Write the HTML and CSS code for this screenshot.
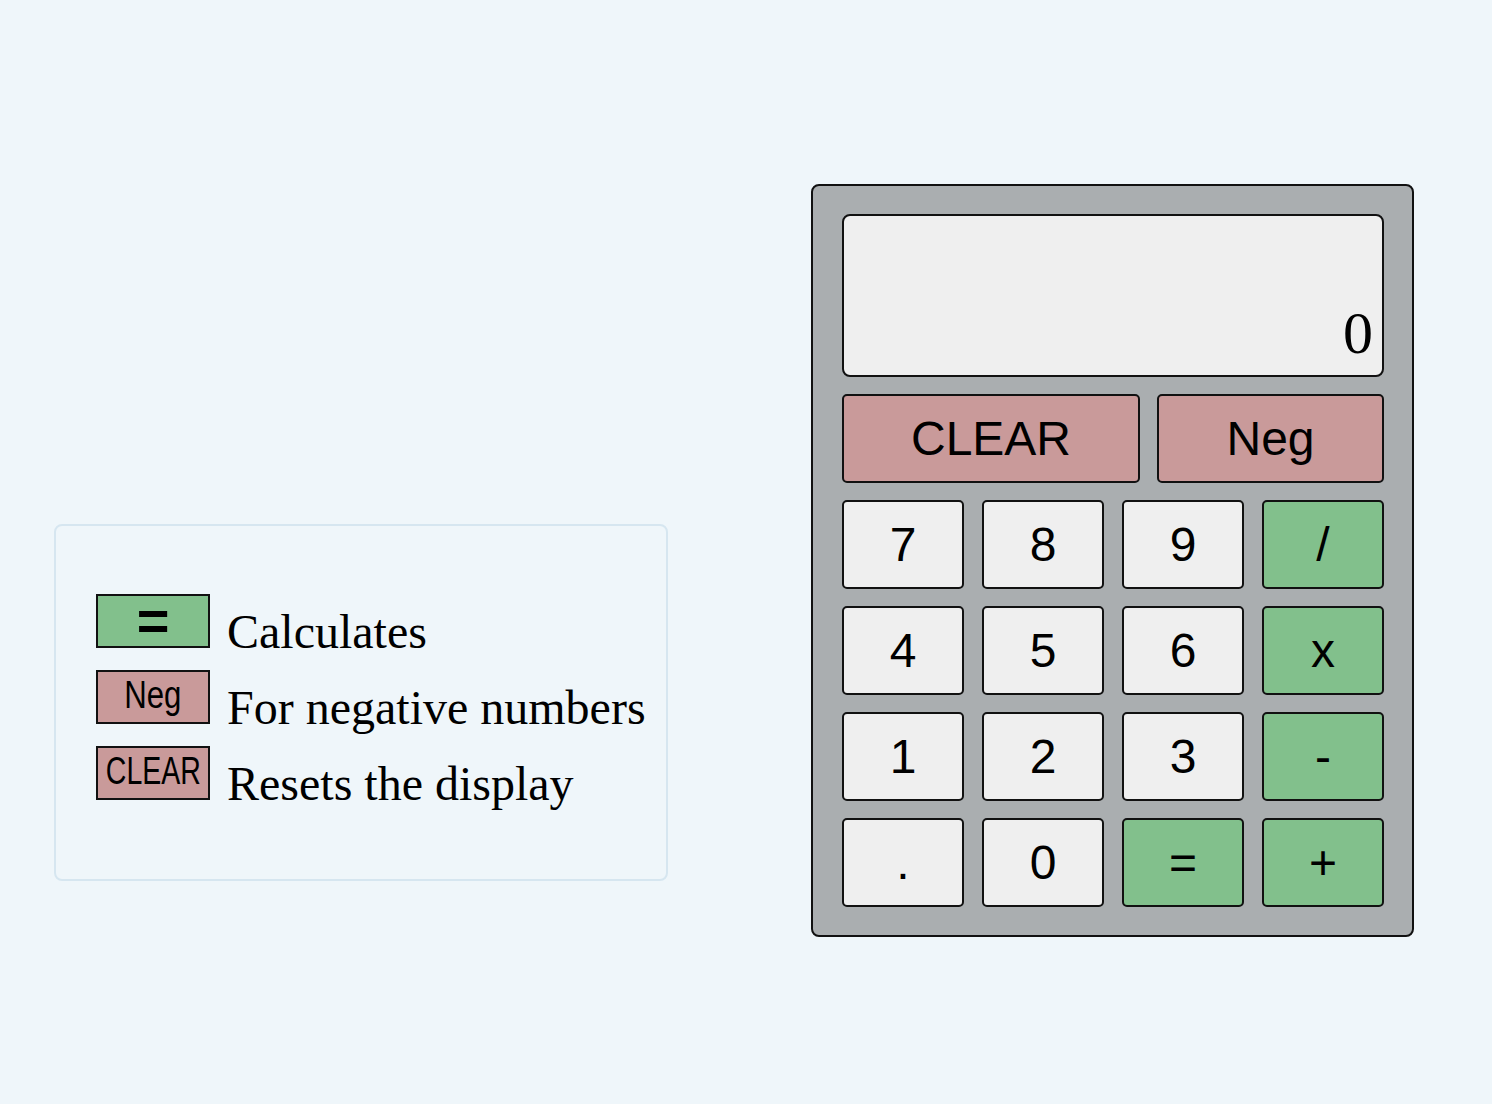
FILE: index.html
```html
<!DOCTYPE html>
<html lang="en">
<head>
<meta charset="utf-8">
<title>Calculator</title>
<link rel="stylesheet" href="styles.css">
</head>
<body>
<div class="page">
  <div class="legend">
    <div class="legend-row"><span class="badge badge-green"><span class="badge-text eq">=</span></span><span class="legend-text">Calculates</span></div>
    <div class="legend-row"><span class="badge badge-pink"><span class="badge-text squish">Neg</span></span><span class="legend-text">For negative numbers</span></div>
    <div class="legend-row"><span class="badge badge-pink"><span class="badge-text squish-more">CLEAR</span></span><span class="legend-text">Resets the display</span></div>
  </div>
  <div class="calc">
    <div class="display"><span class="display-value">0</span></div>
    <div class="top-row">
      <button class="key key-pink key-clear">CLEAR</button>
      <button class="key key-pink key-neg">Neg</button>
    </div>
    <div class="keys">
      <button class="key">7</button>
      <button class="key">8</button>
      <button class="key">9</button>
      <button class="key key-green">/</button>
      <button class="key">4</button>
      <button class="key">5</button>
      <button class="key">6</button>
      <button class="key key-green">x</button>
      <button class="key">1</button>
      <button class="key">2</button>
      <button class="key">3</button>
      <button class="key key-green">-</button>
      <button class="key">.</button>
      <button class="key">0</button>
      <button class="key key-green">=</button>
      <button class="key key-green">+</button>
    </div>
  </div>
</div>
</body>
</html>
```
FILE: styles.css
```css
html, body {
  margin: 0;
  padding: 0;
  background: #eff6fa;
}
body {
  font-family: "Liberation Serif", "Times New Roman", serif;
  color: #000;
}
.page {
  display: flex;
  align-items: flex-start;
  padding: 184px 0 0 54px;
  gap: 143px;
}
.legend {
  box-sizing: border-box;
  width: 614px;
  height: 357px;
  margin-top: 340px;
  border: 2px solid #d6e6f0;
  border-radius: 8px;
  padding: 68px 0 0 40px;
  display: flex;
  flex-direction: column;
  gap: 22px;
}
.legend-row {
  height: 54px;
  display: flex;
  align-items: flex-end;
  white-space: nowrap;
}
.legend-text {
  font-size: 48px;
  line-height: 48px;
  margin-bottom: -8px;
}
.badge {
  box-sizing: border-box;
  width: 114px;
  height: 54px;
  flex: none;
  align-self: flex-start;
  border: 2px solid #111;
  margin-right: 17px;
  display: flex;
  justify-content: center;
  align-items: flex-start;
  font-family: "Liberation Sans", Arial, sans-serif;
  font-size: 38px;
  line-height: 46px;
}
.badge-green { background: #82c08c; }
.badge-pink { background: #c99a9a; }
.badge-text {
  flex: none;
  display: block;
}
.eq {
  font-weight: bold;
  font-size: 56px;
  line-height: 50px;
}
.squish {
  transform: scaleX(0.82);
}
.squish-more {
  transform: scaleX(0.75);
}
.calc {
  box-sizing: border-box;
  width: 603px;
  background: #aaaeb0;
  border: 2px solid #111;
  border-radius: 8px;
  padding: 28px 28px 28px 29px;
  display: flex;
  flex-direction: column;
  gap: 17px;
}
.display {
  box-sizing: border-box;
  height: 163px;
  background: #efefef;
  border: 2px solid #111;
  border-radius: 8px;
  display: flex;
  align-items: flex-end;
  justify-content: flex-end;
  padding: 0 9px 12px 0;
}
.display-value {
  font-family: "Liberation Serif", "Times New Roman", serif;
  font-size: 60px;
  line-height: 1;
}
.top-row {
  display: flex;
  gap: 17px;
}
.key {
  box-sizing: border-box;
  height: 89px;
  margin: 0;
  padding: 0;
  background: #efefef;
  border: 2px solid #111;
  border-radius: 5px;
  font-family: "Liberation Sans", Arial, sans-serif;
  font-size: 48px;
  color: #000;
  display: flex;
  align-items: center;
  justify-content: center;
}
.key-pink { background: #c99a9a; }
.key-green { background: #82c08c; }
.key-clear { width: 298px; }
.key-neg { width: 227px; }
.keys {
  display: grid;
  grid-template-columns: repeat(4, 122px);
  grid-auto-rows: 89px;
  column-gap: 18px;
  row-gap: 17px;
}
```
